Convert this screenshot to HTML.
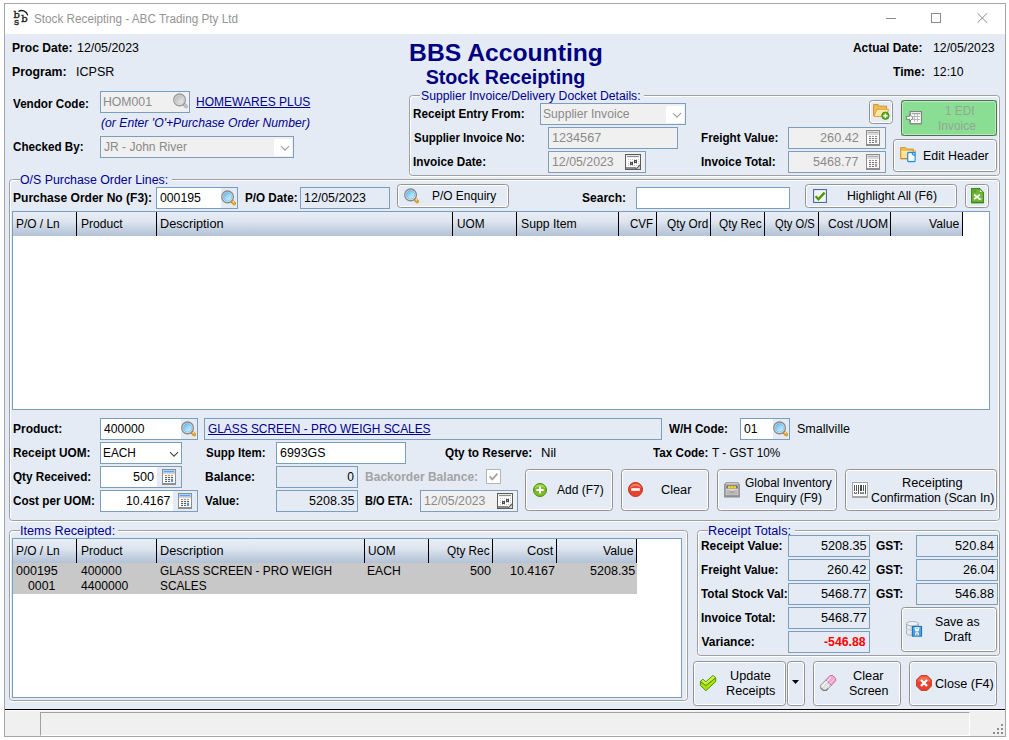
<!DOCTYPE html>
<html><head><meta charset="utf-8"><title>Stock Receipting - ABC Trading Pty Ltd</title>
<style>
*{box-sizing:border-box;margin:0;padding:0}
html,body{width:1009px;height:740px;overflow:hidden;background:#fff}
body{font-family:"Liberation Sans",Arial,sans-serif;font-size:12px;color:#000;position:relative}
.a{position:absolute;white-space:nowrap;line-height:14px;transform-origin:0 0}
.b{font-weight:bold;letter-spacing:-0.25px}
.ic{position:absolute;display:block;overflow:visible}
.win{position:absolute;left:4px;top:3px;width:1002px;height:734px;border:1px solid #a6a6a6;background:#e4ebf5}
.tb{position:absolute;left:5px;top:4px;width:1000px;height:30px;background:#fff}
.tt{position:absolute;left:34px;top:11px;font-size:12px;letter-spacing:-0.13px;color:#8c8c8c;white-space:nowrap;line-height:15px}
.gb{position:absolute;border:1px solid #a0a0a0;border-radius:3.5px;box-shadow:inset 1px 1px 0 #fff,inset -1px 0 0 #fff,0 1px 0 #fff}
.lg{position:absolute;top:-7px;left:9px;background:#e4ebf5;color:#00008b;padding:0 2px 0 2px;line-height:14px;white-space:nowrap;letter-spacing:0.09px}
.in{position:absolute;border:1px solid #7b9ebd;background:#fff;height:22px;line-height:20px;padding:0 3px;white-space:nowrap;overflow:hidden}
.dis{background:#f0f0f0;color:#8a8a8a}
.ro{background:#e4ebf5}
.r{text-align:right}
.n{letter-spacing:0.3px}
.btn{position:absolute;border:1px solid #949494;border-radius:3.5px;background:#e4ebf5;box-shadow:inset 0 0 0 1px #fff;text-align:center;line-height:15px;font-size:12.5px}
.hd{position:absolute;top:0;height:24px;line-height:23px;padding:0 3px 0 4px;border-right:1px solid #000;background:linear-gradient(#e9eef6,#dde5f0 40%,#c3cfdf 75%,#b3c2d7);white-space:nowrap;overflow:hidden}
.grid{position:absolute;background:#fff;border:1px solid #7b9ebd;overflow:hidden}
.nav{color:#00008b}
.sq{position:absolute;width:2px;height:2px;background:#8e8e8e}
</style></head><body>
<svg width="0" height="0" style="position:absolute"><defs><linearGradient id="mgc" x1="0.15" y1="0.1" x2="0.85" y2="0.9"><stop offset="0" stop-color="#6cb8ee"/><stop offset="0.6" stop-color="#a6e0f8"/><stop offset="1" stop-color="#c4eefb"/></linearGradient><linearGradient id="mgg" x1="0.15" y1="0.1" x2="0.85" y2="0.9"><stop offset="0" stop-color="#bdbdbd"/><stop offset="0.55" stop-color="#d6d6d6"/><stop offset="1" stop-color="#ececec"/></linearGradient></defs></svg>
<div class="win"></div><div class="tb"></div>
<svg class="ic" style="left:14px;top:10px" width="16" height="16" viewBox="0 0 16 16"><text x="-0.5" y="7.9" font-family="'DejaVu Serif',serif" stroke="#1a1a1a" stroke-width="0.35" font-size="10" fill="#1a1a1a">b</text><text x="0" y="14.5" font-family="'DejaVu Serif',serif" stroke="#1a1a1a" stroke-width="0.35" font-size="10" fill="#1a1a1a">s</text><text x="7.3" y="11.7" font-family="'DejaVu Serif',serif" stroke="#1a1a1a" stroke-width="0.35" font-size="10" fill="#1a1a1a">b</text><path d="M4.4 1.5 C7.6 -0.5 12.4 0.6 13.8 5.4" fill="none" stroke="#1a1a1a" stroke-width="1.3"/></svg>
<div class="a" style="left:33.81px;top:11.5px;line-height:15px;transform:scaleX(0.9769);color:#949494;">Stock Receipting - ABC Trading Pty Ltd</div>
<svg class="ic" style="left:886px;top:13px" width="102" height="10" viewBox="0 0 102 10"><path d="M0 5.5 h10" stroke="#8a8a8a" stroke-width="1"/><rect x="45.5" y="0.5" width="9" height="9" fill="none" stroke="#8a8a8a" stroke-width="1"/><path d="M91.5 0.2 L101.2 9.8 M101.2 0.2 L91.5 9.8" stroke="#8a8a8a" stroke-width="1"/></svg>
<div class="a" style="left:12.49px;top:41px;line-height:14px;transform:scaleX(1.0086);font-weight:bold;">Proc Date:</div>
<div class="a" style="left:76.67px;top:41px;line-height:14px;transform:scaleX(1.0324);">12/05/2023</div>
<div class="a" style="left:12.48px;top:65px;line-height:14px;transform:scaleX(1.0233);font-weight:bold;">Program:</div>
<div class="a" style="left:76.15px;top:65px;line-height:14px;transform:scaleX(1.0457);">ICPSR</div>
<div class="a" style="left:13.20px;top:97px;line-height:14px;transform:scaleX(0.9714);font-weight:bold;">Vendor Code:</div>
<div class="in dis" style="left:100px;top:91px;width:90px;height:22px;"></div>
<div class="a" style="left:103.18px;top:95px;line-height:14px;transform:scaleX(1.0194);color:#8a8a8a;">HOM001</div>
<svg class="ic" style="left:173px;top:93px" width="16" height="16" viewBox="0 0 16 16"><line x1="11" y1="11.2" x2="13.2" y2="13.5" stroke="#a9a9a9" stroke-width="3.4" stroke-linecap="round"/><line x1="11.6" y1="11.9" x2="13.2" y2="13.5" stroke="#c9c9c9" stroke-width="1.8" stroke-linecap="round"/><circle cx="6.55" cy="6.85" r="5.85" fill="#f0f0f0" stroke="#9a9a9a" stroke-width="1.4"/><circle cx="6.55" cy="6.85" r="4.3" fill="url(#mgg)" stroke="#b0b0b0" stroke-width="0.6"/></svg>
<div class="a" style="left:196.10px;top:95px;line-height:14px;color:#00008b;text-decoration:underline;">HOMEWARES PLUS</div>
<div class="a" style="left:101.39px;top:116px;line-height:14px;transform:scaleX(1.0161);font-style:italic;color:#00008b;">(or Enter 'O'+Purchase Order Number)</div>
<div class="a" style="left:12.81px;top:140px;line-height:14px;transform:scaleX(0.9705);font-weight:bold;">Checked By:</div>
<div class="in dis" style="left:100px;top:136px;width:194px;height:22px;"></div>
<div class="a" style="left:104.00px;top:140px;line-height:14px;transform:scaleX(1.0036);color:#8a8a8a;">JR - John River</div>
<div class="a" style="left:274px;top:139px;width:18px;height:17px;background:#fff"></div>
<svg class="ic" style="left:280px;top:145px" width="10" height="7" viewBox="0 0 10 7"><path d="M1 1.2 L5 5.2 L9 1.2" fill="none" stroke="#9c9c9c" stroke-width="1.1"/></svg>
<div class="a" style="left:306px;top:38.5px;width:400px;text-align:center;font-weight:bold;font-size:24.7px;line-height:28px;color:#000080">BBS Accounting</div>
<div class="a" style="left:305.5px;top:64.5px;width:400px;text-align:center;font-weight:bold;font-size:19.7px;line-height:24px;color:#000080">Stock Receipting</div>
<div class="a" style="left:852.80px;top:41px;line-height:14px;transform:scaleX(0.9913);font-weight:bold;">Actual Date:</div>
<div class="a" style="left:933.18px;top:41px;line-height:14px;transform:scaleX(1.0256);">12/05/2023</div>
<div class="a" style="left:893.30px;top:65px;line-height:14px;transform:scaleX(1.0033);font-weight:bold;">Time:</div>
<div class="a" style="left:933.18px;top:65px;line-height:14px;transform:scaleX(1.0209);">12:10</div>
<div class="gb" style="left:409px;top:95px;width:591px;height:81px"></div>
<div class="a" style="left:420.1px;top:95px;width:224.1px;height:2px;background:#e4ebf5"></div>
<div class="a" style="left:421.09px;top:89px;line-height:14px;transform:scaleX(1.0163);color:#00008b;">Supplier Invoice/Delivery Docket Details:</div>
<div class="a" style="left:412.52px;top:107px;line-height:14px;transform:scaleX(0.9734);font-weight:bold;">Receipt Entry From:</div>
<div class="in dis" style="left:540px;top:103px;width:146px;height:22px;"></div>
<div class="a" style="left:542.99px;top:107px;line-height:14px;transform:scaleX(1.0130);color:#8a8a8a;">Supplier Invoice</div>
<div class="a" style="left:666px;top:106px;width:18px;height:17px;background:#fff"></div>
<svg class="ic" style="left:672px;top:112px" width="10" height="7" viewBox="0 0 10 7"><path d="M1 1.2 L5 5.2 L9 1.2" fill="none" stroke="#9c9c9c" stroke-width="1.1"/></svg>
<div class="a" style="left:414.31px;top:131px;line-height:14px;transform:scaleX(0.9555);font-weight:bold;">Supplier Invoice No:</div>
<div class="in dis" style="left:548px;top:127px;width:130px;height:22px;"></div>
<div class="a" style="left:552.15px;top:131px;line-height:14px;transform:scaleX(1.0531);color:#8a8a8a;">1234567</div>
<div class="a" style="left:412.52px;top:155px;line-height:14px;transform:scaleX(0.9780);font-weight:bold;">Invoice Date:</div>
<div class="in dis" style="left:548px;top:151px;width:98px;height:22px;"></div>
<div class="a" style="left:552.18px;top:155px;line-height:14px;transform:scaleX(1.0273);color:#8a8a8a;">12/05/2023</div>
<svg class="ic" style="left:625px;top:154px" width="16" height="16" viewBox="0 0 16 16"><rect x="0.5" y="0.5" width="15" height="15" fill="#fff" stroke="#5c5c5c"/><rect x="1" y="1" width="14" height="1" fill="#e6e6e6"/><rect x="2" y="2" width="12" height="1" fill="#8e8e8e"/><rect x="1" y="3" width="14" height="1" fill="#efefef"/><rect x="3" y="5" width="1" height="1" fill="#c4c4c4"/><rect x="3" y="7" width="1" height="1" fill="#c4c4c4"/><rect x="3" y="9" width="1" height="1" fill="#c4c4c4"/><rect x="3" y="11" width="1" height="1" fill="#c4c4c4"/><rect x="5" y="5" width="1" height="1" fill="#c4c4c4"/><rect x="5" y="7" width="1" height="1" fill="#c4c4c4"/><rect x="5" y="9" width="1" height="1" fill="#c4c4c4"/><rect x="5" y="11" width="1" height="1" fill="#c4c4c4"/><rect x="7" y="5" width="1" height="1" fill="#c4c4c4"/><rect x="7" y="7" width="1" height="1" fill="#c4c4c4"/><rect x="7" y="9" width="1" height="1" fill="#c4c4c4"/><rect x="7" y="11" width="1" height="1" fill="#c4c4c4"/><rect x="9" y="5" width="1" height="1" fill="#c4c4c4"/><rect x="9" y="7" width="1" height="1" fill="#c4c4c4"/><rect x="9" y="9" width="1" height="1" fill="#c4c4c4"/><rect x="9" y="11" width="1" height="1" fill="#c4c4c4"/><rect x="11" y="5" width="1" height="1" fill="#c4c4c4"/><rect x="11" y="7" width="1" height="1" fill="#c4c4c4"/><rect x="11" y="9" width="1" height="1" fill="#c4c4c4"/><rect x="11" y="11" width="1" height="1" fill="#c4c4c4"/><rect x="13" y="5" width="1" height="1" fill="#c4c4c4"/><rect x="13" y="7" width="1" height="1" fill="#c4c4c4"/><rect x="13" y="9" width="1" height="1" fill="#c4c4c4"/><rect x="13" y="11" width="1" height="1" fill="#c4c4c4"/><rect x="9" y="6" width="3" height="3" fill="#4c4c4c"/><rect x="10" y="7" width="1" height="1" fill="#9c9c9c"/><rect x="5" y="8" width="3" height="3" fill="#4c4c4c"/><rect x="6" y="9" width="1" height="1" fill="#9c9c9c"/><rect x="1" y="13" width="10" height="2" fill="#8a8a8a"/><path d="M11 15 L15 11 V15 Z" fill="#d2d2d2"/><path d="M10.6 15.4 L15.4 10.6" stroke="#5c5c5c" stroke-width="1.1"/></svg>
<div class="a" style="left:700.52px;top:131px;line-height:14px;transform:scaleX(0.9755);font-weight:bold;">Freight Value:</div>
<div class="in dis" style="left:788px;top:127px;width:98px;height:22px;"></div>
<div class="a" style="left:819.56px;top:131px;line-height:14px;transform:scaleX(1.0592);color:#8a8a8a;">260.42</div>
<svg class="ic" style="left:866px;top:130px" width="14" height="16" viewBox="0 0 14 16"><rect x="0.5" y="0.5" width="13" height="15" fill="#fff" stroke="#8e8e8e"/><rect x="1" y="1" width="12" height="3.4" fill="#dedede"/><rect x="2" y="2.1" width="10" height="1" fill="#ababab"/><rect x="1" y="4.4" width="12" height="0.5" fill="#c4c4c4"/><rect x="0" y="14" width="14" height="2" fill="#8e8e8e"/><rect x="3" y="5.9" width="2.1" height="1" fill="#858585"/><rect x="6" y="5.9" width="2.1" height="1" fill="#959595"/><rect x="9" y="5.9" width="2.1" height="1" fill="#858585"/><rect x="3" y="7.9" width="2.1" height="1" fill="#6c6c6c"/><rect x="6" y="7.9" width="2.1" height="1" fill="#6c6c6c"/><rect x="9" y="7.9" width="2.1" height="1" fill="#6c6c6c"/><rect x="3" y="9.9" width="2.1" height="1" fill="#6c6c6c"/><rect x="6" y="9.9" width="2.1" height="1" fill="#6c6c6c"/><rect x="3" y="11.9" width="2.1" height="1" fill="#6c6c6c"/><rect x="6" y="11.9" width="2.1" height="1" fill="#6c6c6c"/><rect x="9" y="9.7" width="2.1" height="3.2" fill="#a0a0a0"/></svg>
<div class="a" style="left:700.52px;top:155px;line-height:14px;transform:scaleX(0.9772);font-weight:bold;">Invoice Total:</div>
<div class="in dis" style="left:788px;top:151px;width:98px;height:22px;"></div>
<div class="a" style="left:812.98px;top:155px;line-height:14px;transform:scaleX(1.0473);color:#8a8a8a;">5468.77</div>
<svg class="ic" style="left:866px;top:154px" width="14" height="16" viewBox="0 0 14 16"><rect x="0.5" y="0.5" width="13" height="15" fill="#fff" stroke="#8e8e8e"/><rect x="1" y="1" width="12" height="3.4" fill="#dedede"/><rect x="2" y="2.1" width="10" height="1" fill="#ababab"/><rect x="1" y="4.4" width="12" height="0.5" fill="#c4c4c4"/><rect x="0" y="14" width="14" height="2" fill="#8e8e8e"/><rect x="3" y="5.9" width="2.1" height="1" fill="#858585"/><rect x="6" y="5.9" width="2.1" height="1" fill="#959595"/><rect x="9" y="5.9" width="2.1" height="1" fill="#858585"/><rect x="3" y="7.9" width="2.1" height="1" fill="#6c6c6c"/><rect x="6" y="7.9" width="2.1" height="1" fill="#6c6c6c"/><rect x="9" y="7.9" width="2.1" height="1" fill="#6c6c6c"/><rect x="3" y="9.9" width="2.1" height="1" fill="#6c6c6c"/><rect x="6" y="9.9" width="2.1" height="1" fill="#6c6c6c"/><rect x="3" y="11.9" width="2.1" height="1" fill="#6c6c6c"/><rect x="6" y="11.9" width="2.1" height="1" fill="#6c6c6c"/><rect x="9" y="9.7" width="2.1" height="3.2" fill="#a0a0a0"/></svg>
<div class="btn" style="left:869px;top:100px;width:24px;height:24px;"></div>
<svg class="ic" style="left:873px;top:104px" width="16" height="16" viewBox="0 0 16 16"><path d="M0.6 0.6 h4.6 l1.2 1.6 h7.2 v3.2 h-9.4 l-2.4 6.4 h-1.2 z" fill="#f3bd50" stroke="#d3942a" stroke-width="1"/><path d="M1.3 12.4 l2.7-6.9 h11.6 l-2.7 6.9 z" fill="#fde7a0" stroke="#dca034" stroke-width="1"/><path d="M2.4 11.6 l2.2-5.3 h10" fill="none" stroke="#fff6cf" stroke-width="0.8"/><circle cx="12.4" cy="11.7" r="3.7" fill="#58ab17" stroke="#3c8a0c" stroke-width="0.8"/><path d="M12.4 9.5 v4.4 M10.2 11.7 h4.4" stroke="#fff" stroke-width="1.5"/></svg>
<div class="a" style="left:901px;top:100px;width:96px;height:36px;background:#89de94"></div>
<div class="btn" style="left:901px;top:100px;width:96px;height:36px;background:#89de94;border-color:#5a6a5a;box-shadow:inset 0 0 0 1px #b4eeb4"></div>
<svg class="ic" style="left:906px;top:110px" width="16" height="16" viewBox="0 0 16 16"><rect x="4.2" y="1.6" width="11.2" height="12" fill="#fff" stroke="#7d7d7d" stroke-width="1.1"/><rect x="4.2" y="13" width="11.2" height="1.4" fill="#8a8a8a"/><rect x="5.6" y="3" width="8.6" height="1.2" fill="#a0a0a0"/><g stroke="#b0b0b0" stroke-width="0.9"><path d="M5.8 6.5 h8.2 M5.8 9.5 h8.2 M8.6 4 v8 M11.4 4 v8"/></g><path d="M0.4 6.3 h3.2 v-2 l3.6 3.5 l-3.6 3.5 v-2 h-3.2 z" fill="#fff" stroke="#6e6e6e" stroke-width="0.9"/></svg>
<div class="a" style="left:944.81px;top:103.5px;line-height:15px;transform:scaleX(0.9858);color:#95a595;">1 EDI</div>
<div class="a" style="left:938.30px;top:118.5px;line-height:15px;transform:scaleX(0.9973);color:#95a595;">Invoice</div>
<div class="btn" style="left:893px;top:139px;width:104px;height:33px;"></div>
<svg class="ic" style="left:900px;top:147px" width="16" height="16" viewBox="0 0 16 16"><path d="M0.6 0.6 h5 l1.2 1.5 h6.6 v9.6 h-12.8 z" fill="#f3bd50" stroke="#d3942a" stroke-width="1"/><path d="M1.4 11 v-6.6 h13.6 v6.6 z" fill="#fde39a"/><path d="M1.4 4.6 h13.4" stroke="#fff3c4" stroke-width="0.8"/><path d="M12 4 h3.6 v2" fill="none" stroke="#dca034" stroke-width="0.9"/><rect x="0.6" y="11" width="7" height="1.2" fill="#c88d28"/><rect x="7.7" y="5.5" width="7.4" height="9" rx="0.8" fill="#e9f3fa" stroke="#2590dc" stroke-width="1.3"/><path d="M8.6 6.4 h3.4 v2.6 h2.4 v4.8 h-5.8z" fill="#fff" opacity="0.75"/><path d="M12.2 5.6 c0 2 .8 2.8 2.8 2.8" fill="none" stroke="#2590dc" stroke-width="1.1"/></svg>
<div class="a" style="left:923.36px;top:148.5px;line-height:15px;transform:scaleX(1.0370);">Edit Header</div>
<div class="gb" style="left:9px;top:179px;width:991px;height:342px"></div>
<div class="a" style="left:19.5px;top:179px;width:152.5px;height:2px;background:#e4ebf5"></div>
<div class="a" style="left:20.49px;top:173px;line-height:14px;transform:scaleX(1.0281);color:#00008b;">O/S Purchase Order Lines:</div>
<div class="a" style="left:12.50px;top:191px;line-height:14px;transform:scaleX(1.0029);font-weight:bold;">Purchase Order No (F3):</div>
<div class="in" style="left:156px;top:187px;width:82px;height:22px;"></div>
<div class="a" style="left:160.39px;top:191px;line-height:14px;transform:scaleX(1.0204);">000195</div>
<div class="a" style="left:221px;top:188px;width:16px;height:20px;background:#e4ebf5"></div>
<svg class="ic" style="left:221px;top:190px" width="16" height="16" viewBox="0 0 16 16"><line x1="11" y1="11.2" x2="13.2" y2="13.5" stroke="#cf8a1e" stroke-width="3.7" stroke-linecap="round"/><line x1="11.6" y1="11.9" x2="13.2" y2="13.5" stroke="#f8ae2c" stroke-width="2" stroke-linecap="round"/><circle cx="12.4" cy="11.6" r="0.8" fill="#fde8b4"/><circle cx="6.55" cy="6.85" r="5.85" fill="#f6f6f6" stroke="#8a8a8a" stroke-width="1.4"/><circle cx="6.55" cy="6.85" r="4.3" fill="url(#mgc)" stroke="#58a4e4" stroke-width="0.6"/></svg>
<div class="a" style="left:244.92px;top:191px;line-height:14px;transform:scaleX(0.9731);font-weight:bold;">P/O Date:</div>
<div class="in ro" style="left:300px;top:187px;width:90px;height:22px;"></div>
<div class="a" style="left:303.87px;top:191px;line-height:14px;transform:scaleX(1.0307);">12/05/2023</div>
<div class="btn" style="left:397px;top:184px;width:112px;height:24px;"></div>
<svg class="ic" style="left:404px;top:188px" width="16" height="16" viewBox="0 0 16 16"><line x1="11" y1="11.2" x2="13.2" y2="13.5" stroke="#cf8a1e" stroke-width="3.7" stroke-linecap="round"/><line x1="11.6" y1="11.9" x2="13.2" y2="13.5" stroke="#f8ae2c" stroke-width="2" stroke-linecap="round"/><circle cx="12.4" cy="11.6" r="0.8" fill="#fde8b4"/><circle cx="6.55" cy="6.85" r="5.85" fill="#f6f6f6" stroke="#8a8a8a" stroke-width="1.4"/><circle cx="6.55" cy="6.85" r="4.3" fill="url(#mgc)" stroke="#58a4e4" stroke-width="0.6"/></svg>
<div class="a" style="left:431.61px;top:188.5px;line-height:15px;transform:scaleX(0.9922);">P/O Enquiry</div>
<div class="a" style="left:582.10px;top:191px;line-height:14px;font-weight:bold;">Search:</div>
<div class="in" style="left:636px;top:187px;width:154px;height:22px;"></div>
<div class="btn" style="left:805px;top:184px;width:152px;height:24px;"></div>
<svg class="ic" style="left:813px;top:189px" width="14" height="14" viewBox="0 0 14 14"><rect x="0.5" y="0.5" width="13" height="13" fill="#f4f4f4" stroke="#4a6c9b"/><rect x="1.5" y="1.5" width="11" height="11" fill="none" stroke="#dfe6ee"/><path d="M2.6 7.2 L5.4 10.2 L11.6 3.6" fill="none" stroke="#4e9a06" stroke-width="2.4"/></svg>
<div class="a" style="left:847.48px;top:188.5px;line-height:15px;transform:scaleX(1.0220);">Highlight All (F6)</div>
<div class="btn" style="left:965px;top:184px;width:24px;height:24px;"></div>
<svg class="ic" style="left:971px;top:188px" width="13" height="16" viewBox="0 0 13 16"><path d="M0.6 0.6 h8 l3.8 3.8 v10.4 h-11.8 z" fill="#74b63c" stroke="#3b8a14" stroke-width="1.1"/><path d="M1.6 1.6 h3.8 v3 h-3.8z" fill="#5fa32a"/><path d="M8.4 0.9 v3.6 h3.8 z" fill="#f2f9ea" stroke="#3b8a14" stroke-width="0.6"/><rect x="0.6" y="13.8" width="11.8" height="1.4" fill="#3b8a14"/><path d="M3.2 6.6 L8.8 11.2 M8.8 6.6 L3.2 11.2" stroke="#fff" stroke-width="1.7"/><path d="M7.6 11.3 h2.4 v-1" fill="none" stroke="#fff" stroke-width="0.9"/></svg>
<div class="grid" style="left:12px;top:211px;width:978px;height:199px"><div class="hd" style="left:0px;width:64px"></div><div class="hd" style="left:64px;width:80px"></div><div class="hd" style="left:144px;width:296px"></div><div class="hd" style="left:440px;width:64px"></div><div class="hd" style="left:504px;width:102px"></div><div class="hd" style="left:606px;width:38px"></div><div class="hd" style="left:644px;width:54px"></div><div class="hd" style="left:698px;width:54px"></div><div class="hd" style="left:752px;width:54px"></div><div class="hd" style="left:806px;width:72px"></div><div class="hd" style="left:878px;width:72px"></div></div>
<div class="a" style="left:16.31px;top:217px;line-height:14px;transform:scaleX(0.9929);">P/O / Ln</div>
<div class="a" style="left:80.59px;top:217px;line-height:14px;transform:scaleX(1.0074);">Product</div>
<div class="a" style="left:160.44px;top:217px;line-height:14px;transform:scaleX(1.0584);">Description</div>
<div class="a" style="left:456.61px;top:217px;line-height:14px;transform:scaleX(0.9847);">UOM</div>
<div class="a" style="left:520.99px;top:217px;line-height:14px;transform:scaleX(1.0169);">Supp Item</div>
<div class="a" style="left:629.82px;top:217px;line-height:14px;transform:scaleX(0.9652);">CVF</div>
<div class="a" style="left:666.51px;top:217px;line-height:14px;transform:scaleX(0.9828);">Qty Ord</div>
<div class="a" style="left:719.01px;top:217px;line-height:14px;transform:scaleX(0.9812);">Qty Rec</div>
<div class="a" style="left:775.23px;top:217px;line-height:14px;transform:scaleX(0.9305);">Qty O/S</div>
<div class="a" style="left:828.09px;top:217px;line-height:14px;transform:scaleX(1.0121);">Cost /UOM</div>
<div class="a" style="left:928.60px;top:217px;line-height:14px;transform:scaleX(1.0137);">Value</div>
<div class="a" style="left:12.50px;top:422px;line-height:14px;transform:scaleX(0.9979);font-weight:bold;">Product:</div>
<div class="in" style="left:100px;top:418px;width:98px;height:22px;"></div>
<div class="a" style="left:104.40px;top:422px;line-height:14px;transform:scaleX(1.0127);">400000</div>
<div class="a" style="left:181px;top:419px;width:16px;height:20px;background:#e4ebf5"></div>
<svg class="ic" style="left:181px;top:421px" width="16" height="16" viewBox="0 0 16 16"><line x1="11" y1="11.2" x2="13.2" y2="13.5" stroke="#cf8a1e" stroke-width="3.7" stroke-linecap="round"/><line x1="11.6" y1="11.9" x2="13.2" y2="13.5" stroke="#f8ae2c" stroke-width="2" stroke-linecap="round"/><circle cx="12.4" cy="11.6" r="0.8" fill="#fde8b4"/><circle cx="6.55" cy="6.85" r="5.85" fill="#f6f6f6" stroke="#8a8a8a" stroke-width="1.4"/><circle cx="6.55" cy="6.85" r="4.3" fill="url(#mgc)" stroke="#58a4e4" stroke-width="0.6"/></svg>
<div class="in ro" style="left:204px;top:418px;width:458px;height:22px;"></div>
<div class="a" style="left:207.91px;top:422px;line-height:14px;transform:scaleX(0.9902);color:#00008b;text-decoration:underline;">GLASS SCREEN - PRO WEIGH SCALES</div>
<div class="a" style="left:669.30px;top:422px;line-height:14px;transform:scaleX(0.9715);font-weight:bold;">W/H Code:</div>
<div class="in" style="left:740px;top:418px;width:50px;height:22px;"></div>
<div class="a" style="left:744.19px;top:422px;line-height:14px;transform:scaleX(1.0161);">01</div>
<div class="a" style="left:773px;top:419px;width:16px;height:20px;background:#e4ebf5"></div>
<svg class="ic" style="left:773px;top:421px" width="16" height="16" viewBox="0 0 16 16"><line x1="11" y1="11.2" x2="13.2" y2="13.5" stroke="#cf8a1e" stroke-width="3.7" stroke-linecap="round"/><line x1="11.6" y1="11.9" x2="13.2" y2="13.5" stroke="#f8ae2c" stroke-width="2" stroke-linecap="round"/><circle cx="12.4" cy="11.6" r="0.8" fill="#fde8b4"/><circle cx="6.55" cy="6.85" r="5.85" fill="#f6f6f6" stroke="#8a8a8a" stroke-width="1.4"/><circle cx="6.55" cy="6.85" r="4.3" fill="url(#mgc)" stroke="#58a4e4" stroke-width="0.6"/></svg>
<div class="a" style="left:796.68px;top:422px;line-height:14px;transform:scaleX(1.0443);">Smallville</div>
<div class="a" style="left:12.51px;top:446px;line-height:14px;transform:scaleX(0.9844);font-weight:bold;">Receipt UOM:</div>
<div class="in" style="left:100px;top:442px;width:82px;height:22px;"></div>
<div class="a" style="left:102.62px;top:446px;line-height:14px;transform:scaleX(0.9841);">EACH</div>
<svg class="ic" style="left:168.5px;top:451px" width="10" height="7" viewBox="0 0 10 7"><path d="M1 1.2 L5 5.2 L9 1.2" fill="none" stroke="#444" stroke-width="1.1"/></svg>
<div class="a" style="left:206.21px;top:446px;line-height:14px;transform:scaleX(0.9604);font-weight:bold;">Supp Item:</div>
<div class="in" style="left:276px;top:442px;width:130px;height:22px;"></div>
<div class="a" style="left:279.78px;top:446px;line-height:14px;transform:scaleX(1.0326);">6993GS</div>
<div class="a" style="left:444.71px;top:446px;line-height:14px;transform:scaleX(0.9828);font-weight:bold;">Qty to Reserve:</div>
<div class="a" style="left:540.71px;top:446px;line-height:14px;transform:scaleX(1.0902);">Nil</div>
<div class="a" style="left:653.20px;top:446px;line-height:14px;transform:scaleX(0.9714);font-weight:bold;">Tax Code:</div>
<div class="a" style="left:712.10px;top:446px;line-height:14px;transform:scaleX(0.9797);">T - GST 10%</div>
<div class="a" style="left:12.81px;top:470px;line-height:14px;transform:scaleX(0.9770);font-weight:bold;">Qty Received:</div>
<div class="in" style="left:100px;top:466px;width:82px;height:22px;"></div>
<div class="a" style="left:132.67px;top:470px;line-height:14px;transform:scaleX(1.0526);">500</div>
<div class="a" style="left:157px;top:467px;width:24px;height:20px;background:#e4ebf5"></div>
<svg class="ic" style="left:162px;top:469px" width="14" height="16" viewBox="0 0 14 16"><rect x="0.5" y="0.5" width="13" height="15" fill="#fff" stroke="#8e8e8e"/><rect x="1" y="1" width="12" height="3.4" fill="#acd3f8"/><rect x="2" y="2.1" width="10" height="1" fill="#5a9be8"/><rect x="1" y="4.4" width="12" height="0.5" fill="#c4c4c4"/><rect x="0" y="14" width="14" height="2" fill="#8e8e8e"/><rect x="3" y="5.9" width="2.1" height="1" fill="#f47a20"/><rect x="6" y="5.9" width="2.1" height="1" fill="#8a8a8a"/><rect x="9" y="5.9" width="2.1" height="1" fill="#f47a20"/><rect x="3" y="7.9" width="2.1" height="1" fill="#4a4a4a"/><rect x="6" y="7.9" width="2.1" height="1" fill="#4a4a4a"/><rect x="9" y="7.9" width="2.1" height="1" fill="#4a4a4a"/><rect x="3" y="9.9" width="2.1" height="1" fill="#4a4a4a"/><rect x="6" y="9.9" width="2.1" height="1" fill="#4a4a4a"/><rect x="3" y="11.9" width="2.1" height="1" fill="#4a4a4a"/><rect x="6" y="11.9" width="2.1" height="1" fill="#4a4a4a"/><rect x="9" y="9.7" width="2.1" height="3.2" fill="#4a90e6"/></svg>
<div class="a" style="left:204.70px;top:470px;line-height:14px;transform:scaleX(1.0021);font-weight:bold;">Balance:</div>
<div class="in ro" style="left:276px;top:466px;width:82px;height:22px;"></div>
<div class="a" style="left:347.17px;top:470px;line-height:14px;">0</div>
<div class="a" style="left:365.20px;top:470px;line-height:14px;transform:scaleX(1.0036);font-weight:bold;color:#a3a3a3;">Backorder Balance:</div>
<svg class="ic" style="left:486px;top:469px" width="15" height="15" viewBox="0 0 15 15"><rect x="0.5" y="0.5" width="14" height="14" fill="#fff" stroke="#b4b4b4"/><path d="M3.6 7.4 L6.3 10.3 L11.4 4.6" fill="none" stroke="#a2a2a2" stroke-width="1.8"/></svg>
<div class="a" style="left:12.81px;top:494px;line-height:14px;transform:scaleX(0.9745);font-weight:bold;">Cost per UOM:</div>
<div class="in" style="left:100px;top:490px;width:98px;height:22px;"></div>
<div class="a" style="left:125.68px;top:494px;line-height:14px;transform:scaleX(1.0215);">10.4167</div>
<div class="a" style="left:173px;top:491px;width:24px;height:20px;background:#e4ebf5"></div>
<svg class="ic" style="left:178px;top:493px" width="14" height="16" viewBox="0 0 14 16"><rect x="0.5" y="0.5" width="13" height="15" fill="#fff" stroke="#8e8e8e"/><rect x="1" y="1" width="12" height="3.4" fill="#acd3f8"/><rect x="2" y="2.1" width="10" height="1" fill="#5a9be8"/><rect x="1" y="4.4" width="12" height="0.5" fill="#c4c4c4"/><rect x="0" y="14" width="14" height="2" fill="#8e8e8e"/><rect x="3" y="5.9" width="2.1" height="1" fill="#f47a20"/><rect x="6" y="5.9" width="2.1" height="1" fill="#8a8a8a"/><rect x="9" y="5.9" width="2.1" height="1" fill="#f47a20"/><rect x="3" y="7.9" width="2.1" height="1" fill="#4a4a4a"/><rect x="6" y="7.9" width="2.1" height="1" fill="#4a4a4a"/><rect x="9" y="7.9" width="2.1" height="1" fill="#4a4a4a"/><rect x="3" y="9.9" width="2.1" height="1" fill="#4a4a4a"/><rect x="6" y="9.9" width="2.1" height="1" fill="#4a4a4a"/><rect x="3" y="11.9" width="2.1" height="1" fill="#4a4a4a"/><rect x="6" y="11.9" width="2.1" height="1" fill="#4a4a4a"/><rect x="9" y="9.7" width="2.1" height="3.2" fill="#4a90e6"/></svg>
<div class="a" style="left:205.40px;top:494px;line-height:14px;transform:scaleX(0.9737);font-weight:bold;">Value:</div>
<div class="in ro" style="left:276px;top:490px;width:82px;height:22px;"></div>
<div class="a" style="left:308.68px;top:494px;line-height:14px;transform:scaleX(1.0472);">5208.35</div>
<div class="a" style="left:365.26px;top:494px;line-height:14px;transform:scaleX(0.9198);font-weight:bold;">B/O ETA:</div>
<div class="in dis" style="left:420px;top:490px;width:98px;height:22px;"></div>
<div class="a" style="left:424.28px;top:494px;line-height:14px;transform:scaleX(1.0221);color:#8a8a8a;">12/05/2023</div>
<svg class="ic" style="left:497px;top:493px" width="16" height="16" viewBox="0 0 16 16"><rect x="0.5" y="0.5" width="15" height="15" fill="#fff" stroke="#5c5c5c"/><rect x="1" y="1" width="14" height="1" fill="#e6e6e6"/><rect x="2" y="2" width="12" height="1" fill="#8e8e8e"/><rect x="1" y="3" width="14" height="1" fill="#efefef"/><rect x="3" y="5" width="1" height="1" fill="#c4c4c4"/><rect x="3" y="7" width="1" height="1" fill="#c4c4c4"/><rect x="3" y="9" width="1" height="1" fill="#c4c4c4"/><rect x="3" y="11" width="1" height="1" fill="#c4c4c4"/><rect x="5" y="5" width="1" height="1" fill="#c4c4c4"/><rect x="5" y="7" width="1" height="1" fill="#c4c4c4"/><rect x="5" y="9" width="1" height="1" fill="#c4c4c4"/><rect x="5" y="11" width="1" height="1" fill="#c4c4c4"/><rect x="7" y="5" width="1" height="1" fill="#c4c4c4"/><rect x="7" y="7" width="1" height="1" fill="#c4c4c4"/><rect x="7" y="9" width="1" height="1" fill="#c4c4c4"/><rect x="7" y="11" width="1" height="1" fill="#c4c4c4"/><rect x="9" y="5" width="1" height="1" fill="#c4c4c4"/><rect x="9" y="7" width="1" height="1" fill="#c4c4c4"/><rect x="9" y="9" width="1" height="1" fill="#c4c4c4"/><rect x="9" y="11" width="1" height="1" fill="#c4c4c4"/><rect x="11" y="5" width="1" height="1" fill="#c4c4c4"/><rect x="11" y="7" width="1" height="1" fill="#c4c4c4"/><rect x="11" y="9" width="1" height="1" fill="#c4c4c4"/><rect x="11" y="11" width="1" height="1" fill="#c4c4c4"/><rect x="13" y="5" width="1" height="1" fill="#c4c4c4"/><rect x="13" y="7" width="1" height="1" fill="#c4c4c4"/><rect x="13" y="9" width="1" height="1" fill="#c4c4c4"/><rect x="13" y="11" width="1" height="1" fill="#c4c4c4"/><rect x="9" y="6" width="3" height="3" fill="#4c4c4c"/><rect x="10" y="7" width="1" height="1" fill="#9c9c9c"/><rect x="5" y="8" width="3" height="3" fill="#4c4c4c"/><rect x="6" y="9" width="1" height="1" fill="#9c9c9c"/><rect x="1" y="13" width="10" height="2" fill="#8a8a8a"/><path d="M11 15 L15 11 V15 Z" fill="#d2d2d2"/><path d="M10.6 15.4 L15.4 10.6" stroke="#5c5c5c" stroke-width="1.1"/></svg>
<div class="btn" style="left:525px;top:469px;width:88px;height:42px;"></div>
<svg class="ic" style="left:533px;top:483px" width="14" height="14" viewBox="0 0 14 14"><circle cx="7" cy="7" r="6.5" fill="#7dba28" stroke="#4d8f0b" stroke-width="1"/><path d="M1.6 5.6 a5.6 5.6 0 0 1 10.8 0 a9 9 0 0 0 -10.8 0z" fill="#a7d65a"/><path d="M7 3.4 v7.2 M3.4 7 h7.2" stroke="#fff" stroke-width="2"/></svg>
<div class="a" style="left:557.10px;top:482.5px;line-height:15px;">Add (F7)</div>
<div class="btn" style="left:621px;top:469px;width:88px;height:42px;"></div>
<svg class="ic" style="left:628px;top:482px" width="15" height="15" viewBox="0 0 15 15"><circle cx="7.5" cy="7.5" r="7" fill="#e8432e" stroke="#c22f1d" stroke-width="1"/><path d="M1.8 6 a6 6 0 0 1 11.4 0 a10 10 0 0 0 -11.4 0z" fill="#f47a63"/><rect x="3.2" y="6.2" width="8.6" height="2.6" fill="#fff"/></svg>
<div class="a" style="left:660.76px;top:482.5px;line-height:15px;transform:scaleX(1.0609);">Clear</div>
<div class="btn" style="left:717px;top:469px;width:120px;height:42px;"></div>
<svg class="ic" style="left:724px;top:482px" width="16" height="16" viewBox="0 0 16 16"><path d="M2 0.3 h12 l1.9 2 v13.3 h-15.8 v-13.3z" fill="#8c8c8c"/><path d="M2.4 1.1 h11.2 l1 1.2 h-13.2z" fill="#c9c9c9"/><rect x="1.6" y="2.6" width="12.8" height="10.6" fill="#d2d2d2"/><rect x="2.4" y="3.4" width="11.2" height="3.2" fill="#5a606c"/><path d="M3.8 6.4 v-2 l1.4-.6 1.5.8 1.5-.8 1.5.8 1.4-.6 1.1.6 v1.8z" fill="#f6d52e"/><path d="M6.2 5 l1.2 1 M8.8 4.6 l1.4 1.2" stroke="#f29a1c" stroke-width="0.7"/><rect x="2.4" y="7" width="11.2" height="5.8" fill="#b9b9b9"/><rect x="2.4" y="7" width="11.2" height="0.7" fill="#e6e6e6"/><rect x="5.8" y="8.2" width="4.2" height="2.8" fill="#a2a2a2"/><rect x="5.8" y="8.2" width="4.2" height="0.9" fill="#dedede"/></svg>
<div class="a" style="left:745.00px;top:475.5px;line-height:15px;transform:scaleX(0.9931);">Global Inventory</div>
<div class="a" style="left:754.59px;top:490.5px;line-height:15px;transform:scaleX(1.0140);">Enquiry (F9)</div>
<div class="btn" style="left:845px;top:469px;width:152px;height:42px;"></div>
<svg class="ic" style="left:852px;top:482px" width="16" height="16" viewBox="0 0 16 16"><rect x="0.5" y="0.5" width="15" height="15" fill="#fff" stroke="#a6a6a6"/><rect x="2" y="3" width="1" height="6" fill="#555"/><rect x="4" y="3" width="1" height="6" fill="#555"/><rect x="6" y="3" width="1" height="9" fill="#555"/><rect x="8" y="3" width="2" height="6" fill="#4a4a4a"/><rect x="11" y="3" width="1" height="6" fill="#555"/><rect x="13" y="3" width="1" height="9" fill="#555"/><rect x="2" y="10" width="3" height="2" fill="#7a7a7a"/><rect x="8" y="10" width="4" height="2" fill="#7a7a7a"/><rect x="3" y="10" width="1" height="1" fill="#ddd"/><rect x="9.4" y="10" width="1" height="1" fill="#ddd"/><rect x="0" y="14" width="16" height="2" fill="#a6a6a6"/></svg>
<div class="a" style="left:902.03px;top:475.5px;line-height:15px;transform:scaleX(1.0674);">Receipting</div>
<div class="a" style="left:870.88px;top:490.5px;line-height:15px;transform:scaleX(1.0269);">Confirmation (Scan In)</div>
<div class="gb" style="left:9px;top:530px;width:679px;height:171px"></div>
<div class="a" style="left:19.5px;top:530px;width:98.9px;height:2px;background:#e4ebf5"></div>
<div class="a" style="left:19.84px;top:524px;line-height:14px;transform:scaleX(1.0569);color:#00008b;">Items Receipted:</div>
<div class="grid" style="left:12px;top:538px;width:670px;height:160px"><div class="hd" style="left:0px;width:64px"></div><div class="hd" style="left:64px;width:80px"></div><div class="hd" style="left:144px;width:208px"></div><div class="hd" style="left:352px;width:64px"></div><div class="hd" style="left:416px;width:64px"></div><div class="hd" style="left:480px;width:64px"></div><div class="hd" style="left:544px;width:80px"></div></div>
<div class="a" style="left:13px;top:563px;width:624px;height:31px;background:#c8c8c8"></div>
<div class="a" style="left:16.31px;top:544px;line-height:14px;transform:scaleX(0.9929);">P/O / Ln</div>
<div class="a" style="left:80.59px;top:544px;line-height:14px;transform:scaleX(1.0074);">Product</div>
<div class="a" style="left:160.44px;top:544px;line-height:14px;transform:scaleX(1.0584);">Description</div>
<div class="a" style="left:368.41px;top:544px;line-height:14px;transform:scaleX(0.9847);">UOM</div>
<div class="a" style="left:446.71px;top:544px;line-height:14px;transform:scaleX(0.9812);">Qty Rec</div>
<div class="a" style="left:526.86px;top:544px;line-height:14px;transform:scaleX(1.0667);">Cost</div>
<div class="a" style="left:603.10px;top:544px;line-height:14px;transform:scaleX(1.0239);">Value</div>
<div class="a" style="left:16.18px;top:564px;line-height:14px;transform:scaleX(1.0434);">000195</div>
<div class="a" style="left:28.19px;top:579px;line-height:14px;transform:scaleX(1.0233);">0001</div>
<div class="a" style="left:80.70px;top:564px;line-height:14px;transform:scaleX(1.0152);">400000</div>
<div class="a" style="left:80.70px;top:579px;line-height:14px;transform:scaleX(1.0130);">4400000</div>
<div class="a" style="left:160.21px;top:564px;line-height:14px;transform:scaleX(0.9884);">GLASS SCREEN - PRO WEIGH</div>
<div class="a" style="left:160.31px;top:579px;line-height:14px;transform:scaleX(0.9849);">SCALES</div>
<div class="a" style="left:367.29px;top:564px;line-height:14px;transform:scaleX(1.0096);">EACH</div>
<div class="a" style="left:469.97px;top:564px;line-height:14px;transform:scaleX(1.0526);">500</div>
<div class="a" style="left:509.87px;top:564px;line-height:14px;transform:scaleX(1.0334);">10.4167</div>
<div class="a" style="left:589.88px;top:564px;line-height:14px;transform:scaleX(1.0448);">5208.35</div>
<div class="gb" style="left:697px;top:530px;width:303px;height:126px"></div>
<div class="a" style="left:707.8px;top:530px;width:86.9px;height:2px;background:#e4ebf5"></div>
<div class="a" style="left:708.24px;top:524px;line-height:14px;transform:scaleX(1.0575);color:#00008b;">Receipt Totals:</div>
<div class="a" style="left:700.50px;top:539px;line-height:14px;transform:scaleX(0.9938);font-weight:bold;">Receipt Value:</div>
<div class="in ro" style="left:788px;top:535px;width:82px;height:22px;"></div>
<div class="a" style="left:820.67px;top:539px;line-height:14px;transform:scaleX(1.0519);">5208.35</div>
<div class="a" style="left:876.30px;top:539px;line-height:14px;transform:scaleX(0.9961);font-weight:bold;">GST:</div>
<div class="in ro" style="left:916px;top:535px;width:82px;height:22px;"></div>
<div class="a" style="left:955.47px;top:539px;line-height:14px;transform:scaleX(1.0615);">520.84</div>
<div class="a" style="left:700.52px;top:563px;line-height:14px;transform:scaleX(0.9755);font-weight:bold;">Freight Value:</div>
<div class="in ro" style="left:788px;top:559px;width:82px;height:22px;"></div>
<div class="a" style="left:827.16px;top:563px;line-height:14px;transform:scaleX(1.0704);">260.42</div>
<div class="a" style="left:876.30px;top:563px;line-height:14px;transform:scaleX(0.9961);font-weight:bold;">GST:</div>
<div class="in ro" style="left:916px;top:559px;width:82px;height:22px;"></div>
<div class="a" style="left:962.77px;top:563px;line-height:14px;transform:scaleX(1.0515);">26.04</div>
<div class="a" style="left:701.20px;top:587px;line-height:14px;transform:scaleX(0.9805);font-weight:bold;">Total Stock Val:</div>
<div class="in ro" style="left:788px;top:583px;width:82px;height:22px;"></div>
<div class="a" style="left:820.67px;top:587px;line-height:14px;transform:scaleX(1.0544);">5468.77</div>
<div class="a" style="left:876.30px;top:587px;line-height:14px;transform:scaleX(0.9961);font-weight:bold;">GST:</div>
<div class="in ro" style="left:916px;top:583px;width:82px;height:22px;"></div>
<div class="a" style="left:955.47px;top:587px;line-height:14px;transform:scaleX(1.0644);">546.88</div>
<div class="a" style="left:700.52px;top:611px;line-height:14px;transform:scaleX(0.9772);font-weight:bold;">Invoice Total:</div>
<div class="in ro" style="left:788px;top:607px;width:82px;height:22px;"></div>
<div class="a" style="left:820.67px;top:611px;line-height:14px;transform:scaleX(1.0544);">5468.77</div>
<div class="a" style="left:701.40px;top:635px;line-height:14px;font-weight:bold;">Variance:</div>
<div class="in ro" style="left:788px;top:631px;width:82px;height:22px;"></div>
<div class="a" style="left:824.39px;top:635px;line-height:14px;transform:scaleX(1.0201);font-weight:bold;color:#ff0000;">-546.88</div>
<div class="btn" style="left:901px;top:607px;width:96px;height:45px;"></div>
<svg class="ic" style="left:906px;top:621px" width="16" height="16" viewBox="0 0 16 16"><path d="M0.5 2.6 v9.6 c0 1.5 2.8 2.3 6 2.3 s6-.8 6-2.3 v-9.6z" fill="#cfd6db" stroke="#a2acb3" stroke-width="0.9"/><path d="M1.2 4 v8 c0 .8 1.4 1.4 3 1.6 v-8.6z" fill="#eef1f3" opacity="0.8"/><ellipse cx="6.5" cy="2.7" rx="6" ry="2.2" fill="#eef1f3" stroke="#a2acb3" stroke-width="0.9"/><path d="M0.5 7.2 c0 1.4 2.8 2.2 6 2.2 s6-.8 6-2.2" fill="none" stroke="#9aa4ab" stroke-width="0.9"/><path d="M0.7 8 c0 1.4 2.8 2.2 5.8 2.2" fill="none" stroke="#f4f6f7" stroke-width="0.8"/><rect x="6.5" y="5.5" width="9" height="9.6" fill="#6fb7ee" stroke="#1877b9" stroke-width="1.2"/><rect x="7.6" y="6.6" width="1.1" height="7.6" fill="#2f8fdc"/><rect x="13.3" y="6.6" width="1.1" height="7.6" fill="#2f8fdc"/><path d="M8.7 6.2 h4.6 v2.2 c0 1.2-1 1.8-2.3 1.8 s-2.3-.6-2.3-1.8z" fill="#f2f8fd"/><path d="M9.2 14.4 v-1.6 c0-1 .8-1.6 1.8-1.6 s1.8 .6 1.8 1.6 v1.6z" fill="#f2f8fd"/><rect x="10.5" y="12.6" width="0.9" height="1.8" fill="#555"/><rect x="10" y="7" width="2" height="0.7" fill="#9a9a9a"/></svg>
<div class="a" style="left:935.29px;top:614.5px;line-height:15px;transform:scaleX(1.0282);">Save as</div>
<div class="a" style="left:944.15px;top:629.5px;line-height:15px;transform:scaleX(1.0520);">Draft</div>
<div class="btn" style="left:693px;top:661px;width:93px;height:45px;"></div>
<svg class="ic" style="left:700px;top:675px" width="16" height="16" viewBox="0 0 16 16"><path d="M0.4 6.4 L5.9 10.2 L15.7 2.8 L15.7 6.6 L5.9 15.7 L0.4 10.4 Z" fill="#9fd800" stroke="#3f8d00" stroke-width="0.9" stroke-linejoin="round"/><path d="M1.4 9.4 L5.9 13.6 L14.8 5.4" fill="none" stroke="#b7e614" stroke-width="1.2"/><path d="M0.4 6.4 L2.9 4.2 L5.9 6.8 L13 0.4 L15.7 2.8 L5.9 10.4 Z" fill="#d3f040" stroke="#3f8d00" stroke-width="0.9" stroke-linejoin="round"/></svg>
<div class="a" style="left:730.15px;top:668.5px;line-height:15px;transform:scaleX(1.0563);">Update</div>
<div class="a" style="left:726.24px;top:683.5px;line-height:15px;transform:scaleX(1.0574);">Receipts</div>
<div class="btn" style="left:787px;top:661px;width:18px;height:45px;"></div>
<svg class="ic" style="left:792px;top:680px" width="7" height="4" viewBox="0 0 7 4"><path d="M0 0 h7 l-3.5 4z" fill="#000"/></svg>
<div class="btn" style="left:813px;top:661px;width:88px;height:45px;"></div>
<svg class="ic" style="left:820px;top:675px" width="16" height="16" viewBox="0 0 16 16"><path d="M0.4 10.4 L5.9 4.9 L11.3 10.4 L6.3 15.5 L3.4 15.5 L0.4 12.8 Z" fill="#dedede" stroke="#8f8f8f" stroke-width="0.9" stroke-linejoin="round"/><path d="M0.8 13 L3.4 15.4 H6.3 L8 13.6" fill="none" stroke="#7c7c7c" stroke-width="1.2"/><path d="M5.9 4.9 L10.2 0.5 L12.8 0.5 L15.6 3.4 L15.6 5.8 L11.3 10.4 Z" fill="#f2a9cb" stroke="#c35f9f" stroke-width="0.9" stroke-linejoin="round"/><path d="M2 11.6 L11 2.2" stroke="#fff" stroke-width="1.2" opacity="0.75"/><path d="M4.4 13.8 L14 4.2" stroke="#fff" stroke-width="0.9" opacity="0.6"/></svg>
<div class="a" style="left:852.56px;top:668.5px;line-height:15px;transform:scaleX(1.0645);">Clear</div>
<div class="a" style="left:848.68px;top:683.5px;line-height:15px;transform:scaleX(1.0381);">Screen</div>
<div class="btn" style="left:909px;top:661px;width:88px;height:45px;"></div>
<svg class="ic" style="left:916px;top:675px" width="16" height="16" viewBox="0 0 16 16"><path d="M4.9 0.6 h6.2 l4.3 4.3 v6.2 l-4.3 4.3 h-6.2 l-4.3-4.3 v-6.2z" fill="#e8412c" stroke="#c63a27" stroke-width="1"/><path d="M5.2 1.6 h5.6 l3.6 3.6 v1.8 a14 14 0 0 0 -12.8 0 v-1.8z" fill="#f26b52"/><path d="M5 5 L11 11 M11 5 L5 11" stroke="#fff" stroke-width="2.4"/></svg>
<div class="a" style="left:934.67px;top:676.5px;line-height:15px;transform:scaleX(1.0494);">Close (F4)</div>
<div class="a" style="left:5px;top:709px;width:1000px;height:1px;background:#000"></div>
<div class="a" style="left:5px;top:710px;width:1000px;height:26px;background:#f0f0f0"></div>
<div class="a" style="left:5px;top:710px;width:1000px;height:1px;background:#fafafa"></div>
<div class="a" style="left:40px;top:712px;width:930px;height:24px;border-top:1px solid #a0a0a0;border-left:1px solid #a0a0a0;border-right:1px solid #fff;border-bottom:1px solid #fff"></div>
<div class="sq" style="left:1001px;top:724px"></div>
<div class="sq" style="left:997px;top:728px"></div>
<div class="sq" style="left:1001px;top:728px"></div>
<div class="sq" style="left:993px;top:732px"></div>
<div class="sq" style="left:997px;top:732px"></div>
<div class="sq" style="left:1001px;top:732px"></div>
</body></html>
